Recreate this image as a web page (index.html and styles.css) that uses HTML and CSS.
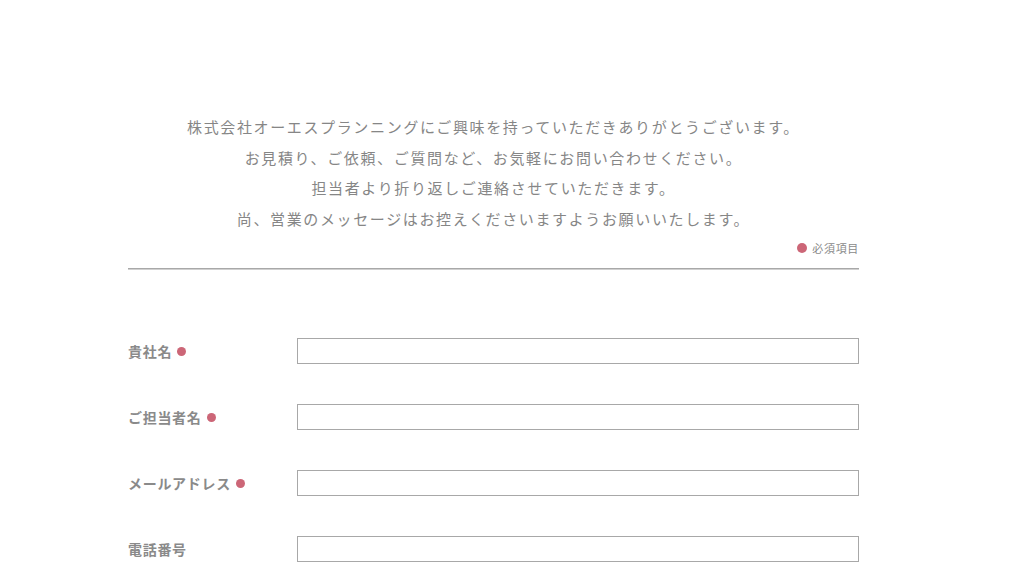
FILE: index.html
```html
<!DOCTYPE html>
<html lang="ja">
<head>
<meta charset="utf-8">
<title>お問い合わせ</title>
<link rel="stylesheet" href="styles.css">
</head>
<body>
<div class="wrap">
  <div class="intro">
    <p>株式会社オーエスプランニングにご興味を持っていただきありがとうございます。</p>
    <p>お見積り、ご依頼、ご質問など、お気軽にお問い合わせください。</p>
    <p>担当者より折り返しご連絡させていただきます。</p>
    <p>尚、営業のメッセージはお控えくださいますようお願いいたします。</p>
  </div>
  <div class="note"><span class="dot"></span>必須項目</div>
  <div class="rule"></div>
  <form class="form">
    <div class="row">
      <label class="label">貴社名<span class="dot"></span></label>
      <input class="field" type="text">
    </div>
    <div class="row">
      <label class="label">ご担当者名<span class="dot"></span></label>
      <input class="field" type="text">
    </div>
    <div class="row">
      <label class="label">メールアドレス<span class="dot"></span></label>
      <input class="field" type="text">
    </div>
    <div class="row">
      <label class="label">電話番号</label>
      <input class="field" type="text">
    </div>
  </form>
</div>
</body>
</html>
```

FILE: styles.css
```css
html, body {
  margin: 0;
  padding: 0;
  background: #fff;
}
body {
  font-family: "Noto Sans CJK JP", "Noto Sans", sans-serif;
  color: #888;
  overflow: hidden;
}
.wrap {
  width: 731px;
  margin: 0 0 0 128px;
  padding-top: 112px;
}
.intro {
  text-align: center;
  font-size: 15px;
  line-height: 30.5px;
  letter-spacing: 0.109em;
  color: #868686;
}
.intro p {
  margin: 0;
}
.note {
  margin-top: 6px;
  display: flex;
  justify-content: flex-end;
  align-items: center;
  gap: 5px;
  font-size: 11px;
  line-height: 16px;
  letter-spacing: 0.06em;
  color: #8a8a8a;
}
.dot {
  display: inline-block;
  width: 10px;
  height: 10px;
  border-radius: 50%;
  background: #cc6677;
}
.rule {
  margin-top: 12px;
  height: 1px;
  background: #a8a8a8;
  border-bottom: 1px solid #d0d0d0;
}
.form {
  margin-top: 68px;
  display: flex;
  flex-direction: column;
  gap: 40px;
}
.row {
  display: flex;
  align-items: center;
}
.label {
  width: 169px;
  flex: none;
  display: flex;
  align-items: center;
  gap: 5px;
  font-size: 14px;
  font-weight: 700;
  letter-spacing: 0.05em;
  color: #8a8a8a;
}
.label .dot {
  width: 9px;
  height: 9px;
}
.field {
  flex: 1;
  box-sizing: border-box;
  height: 26px;
  margin: 0;
  padding: 0 6px;
  border: 1px solid #a8a8a8;
  border-radius: 0;
  background: #fff;
  outline: none;
}
```
